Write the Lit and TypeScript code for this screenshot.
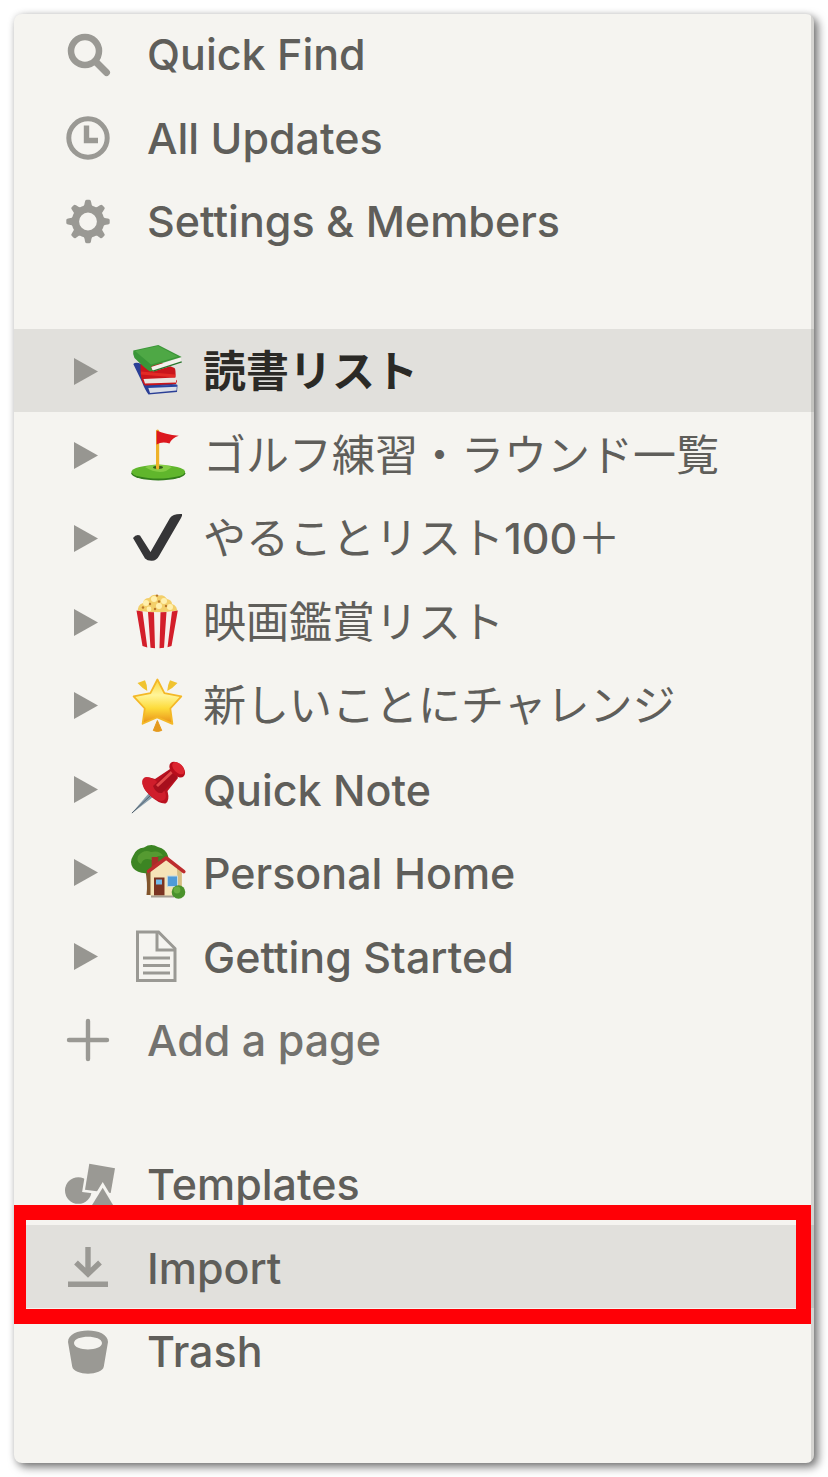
import { LitElement, html, svg, css, nothing } from "lit";
import { customElement } from "lit/decorators.js";

const gearTeeth = [0, 45, 90, 135, 180, 225, 270, 315];

const icons = {
  search: svg`<circle cx="19" cy="20" r="14" fill="none" stroke="currentColor" stroke-width="6.5"/>
    <path d="M30 31L40.5 41.5" stroke="currentColor" stroke-width="7" stroke-linecap="round"/>`,
  clock: svg`<circle cx="22" cy="23" r="19.2" fill="none" stroke="currentColor" stroke-width="5"/>
    <path d="M20.5 10.5V25.5H32" fill="none" stroke="currentColor" stroke-width="5.4"/>`,
  gear: svg`<circle cx="22" cy="23.5" r="12.6" fill="none" stroke="currentColor" stroke-width="7.4"/>
    ${gearTeeth.map(
      (a) => svg`<path transform="rotate(${a} 22 23.5)" d="M16.5 9.5Q18.6 8 19 3.6Q19.2 1.8 20.6 1.8H23.4Q24.8 1.8 25 3.6Q25.4 8 27.5 9.5Z" fill="currentColor"/>`
    )}`,
  plus: svg`<path d="M22 4V42M3 23H41" stroke="currentColor" stroke-width="4.4" stroke-linecap="round"/>`,
  shapes: svg`<circle cx="12.3" cy="29.5" r="13.3" fill="currentColor"/>
    <path d="M23.3 2.8L49 7.2L44.7 32L19 28.8Z" fill="currentColor" stroke="#f5f4f0" stroke-width="5" paint-order="stroke"/>
    <path d="M36.7 26.8L50 49H23Z" fill="currentColor" stroke="#f5f4f0" stroke-width="6" paint-order="stroke"/>`,
  download: svg`<path d="M22 2V29M10 17.5L22 29L34 17.5" fill="none" stroke="currentColor" stroke-width="5.4"/>
    <path d="M2 39.3H42" stroke="currentColor" stroke-width="5.6"/>`,
  bucket: svg`<path fill-rule="evenodd" fill="currentColor" d="M2 14C2 -1.3 42 -1.3 42 14L37.8 38.5C36.5 48 7.5 48 6.2 38.5ZM8 15C8 23.5 36 23.5 36 15C36 6.5 8 6.5 8 15Z"/>`,
};

const emojis = {
  books: svg`<path d="M2.3 21Q4 19 8 20L46.5 42L46 49L17.5 51.5Q14 47 11 39Z" fill="#2a3f96"/>
    <path d="M17 44L46 41.5L45.5 47.5L19 50Z" fill="#d9dde6"/>
    <path d="M17 44L46 42.8" stroke="#2743a0" stroke-width="2"/>
    <path d="M9.7 18.7L24 17L43.5 25Q45 26 44.5 36L46 38L45 41L14 42.5Q8.5 38 9.7 18.7Z" fill="#c9151b"/>
    <path d="M12.5 36L45 34.5V39.5L14 40.5Z" fill="#e9e4df"/>
    <path d="M10 30L44 33" stroke="#e22a25" stroke-width="3"/>
    <path d="M20 24L50 14.5L49.5 20L22 28.5Z" fill="#f3f2ec"/>
    <path d="M2.3 7.5L27.3 2L50.7 14L20.5 23.2Q19.5 25.5 22.5 27.8L19 28.4Q15 26.5 3.5 15Q1.5 11 2.3 7.5Z" fill="#3a9638"/>
    <path d="M4 8L27 3L47 13.5L20 21.5Z" fill="#4ea845"/>
    <path d="M22 28.2L50.7 18.8" stroke="#28752c" stroke-width="1.4"/>`,
  golf: svg`<ellipse cx="27.3" cy="46.2" rx="27" ry="7.2" fill="#347e1d"/>
    <ellipse cx="27.3" cy="44.8" rx="26.8" ry="6.8" fill="#60b62c"/>
    <path d="M14 40Q27 34.5 41 40L35 44Q25 47 14 40Z" fill="#84cc45"/>
    <ellipse cx="27" cy="40.3" rx="5" ry="1.6" fill="#315e1b"/>
    <path d="M26.6 4V41" stroke="#eeb229" stroke-width="3.2" stroke-linecap="round"/>
    <path d="M25.6 3.5Q34 7.5 47.8 8.8Q41 10.8 38.5 16.5Q31 14 25.6 17.5Z" fill="#dc171e"/>`,
  check: svg`<path d="M2 28Q5 24 9 25.5L19.5 42L39 8Q42 3.5 51 4Q51.5 5.5 50 8L28 46Q25.5 50.8 21 50.8Q16.5 51 14 48.5Z" fill="#353537"/>`,
  popcorn: svg`<path d="M7 18Q6 11 12 9Q13 4 18 4Q22 -1 28 1.5Q33 0 36 5Q41 6 41 10Q47 12 46 19Z" fill="#f3cf6a"/>
    <g fill="#fff0ae"><circle cx="15" cy="9" r="3"/><circle cx="23" cy="5" r="3"/><circle cx="33" cy="7" r="3"/><circle cx="28" cy="12" r="3"/><circle cx="39" cy="13" r="3"/><circle cx="18" cy="15" r="2.4"/></g>
    <g fill="#b9762a"><circle cx="26" cy="1.6" r="1.2"/><circle cx="19" cy="10" r="1.2"/><circle cx="28" cy="7.5" r="1.2"/><circle cx="35" cy="12" r="1.2"/><circle cx="12" cy="13.5" r="1.2"/><circle cx="24" cy="15" r="1.2"/></g>
    <path d="M5.5 16.5Q26 20 46.8 16.5L40.5 52Q26 56 11.5 52Z" fill="#f7efec"/>
    <path d="M5.5 16.5L11.5 17.4L16.3 53.4L11.5 52ZM17 18L23 18.2L24 54.2L19.5 53.8ZM29.5 18.2L35.5 18L33 53.8L28.5 54.2ZM41 17.4L46.8 16.5L40.5 52L36.5 53.2Z" fill="#d31e2a"/>`,
  star: svg`<defs><linearGradient id="glow" x1="0" y1="0" x2="0" y2="1"><stop offset="0" stop-color="#fbd63a"/><stop offset="0.35" stop-color="#fff59a"/><stop offset="0.65" stop-color="#fddb3a"/><stop offset="1" stop-color="#e98e17"/></linearGradient></defs>
    <path d="M6.5 6L14 3.2Q16.5 8 16.3 14Q11 11 6.5 6ZM46.5 6L39 3.2Q36.5 8 36.2 14Q42 11 46.5 6Z" fill="#f0c330"/>
    <path d="M26.4 43.5L22.3 53.5Q26.4 55.5 30.7 53.5Z" fill="#e59a1d" stroke="#e59a1d" stroke-linejoin="round"/>
    <path d="M26.4 2.5L33.4 16.2L50.3 19.3L39.3 31.5L41.4 46.8L26.4 40.3L11.6 46.8L13.8 31.5L2.6 19.3L19.4 16.2Z" fill="url(#glow)" stroke="#f4b827" stroke-width="1.8" stroke-linejoin="round"/>`,
  pin: svg`<path d="M0 53L18 32L22 36Z" fill="#879cab"/>
    <path d="M1 52L20 34" stroke="#52616d" stroke-width="1"/>
    <path d="M12 20Q15 14 24 18L39 8L47 17L36.5 30Q39 40 34.5 42.5Q28 43 19 34.5Q10 26 12 20Z" fill="#ba1220"/>
    <ellipse cx="23" cy="28" rx="7.5" ry="15" transform="rotate(-45 23 28)" fill="#d01d2b"/>
    <path d="M22 25L40 8L47 16L31 32Q25 33 22 25Z" fill="#a70f1d"/>
    <path d="M26 25L42 10" stroke="#e34b4b" stroke-width="3"/>
    <ellipse cx="46.2" cy="8.6" rx="6" ry="9.3" transform="rotate(-45 46.2 8.6)" fill="#b80d1b"/>
    <ellipse cx="47.4" cy="7.2" rx="4.4" ry="7.5" transform="rotate(-45 47.4 7.2)" fill="#dc2530"/>`,
  house: svg`<path d="M14 25H24V51H15.5Q17 39 14 25Z" fill="#81552d"/>
    <path d="M2 24Q-2 18 2 12Q5 4 13 3.5Q20 -1 27 3Q35 5 37 12Q40 21 32 25L17 29Q7 30 2 24Z" fill="#3c8523"/>
    <path d="M7 12Q13 5 20 8Q29 6 32 12Q25 11 23 17Q13 12 10 20Q5 18 7 12Z" fill="#559a31"/>
    <path d="M20.7 13H27.3V23H20.7Z" fill="#a72d28"/>
    <path d="M19.5 27L35 15L50.8 28V52H19.5Z" fill="#f5e4b8"/>
    <path d="M46 24L50.8 28V52H47Z" fill="#d6bd82"/>
    <path d="M17.4 27.4L35.2 14L52.8 27.6" fill="none" stroke="#bd2c2d" stroke-width="3.6" stroke-linejoin="round" stroke-linecap="round"/>
    <path d="M23 33.5H33.5V51.5H23Z" fill="#7a3422"/><path d="M25 35.5H31V40.5H25Z" fill="#72b9e8"/>
    <path d="M36.3 32H46.5V42.5H36.3Z" fill="#4f9bd8" stroke="#c7dce0" stroke-width="1"/>
    <path d="M20 52.5H43" stroke="#a59e92" stroke-width="2"/>
    <circle cx="47.5" cy="48" r="6.8" fill="#4a922b"/><circle cx="46" cy="46" r="3.4" fill="#69ad3f"/>`,
  page: svg`<g fill="none" stroke="#9a9994" stroke-width="3"><path d="M6.5 4H27.5L44 20.5V52.5H6.5Z"/><path d="M26 4V22H44"/><path d="M12 30H39M12 37.5H39M12 45H39"/></g>`,
};

type IconName = keyof typeof icons;
type EmojiName = keyof typeof emojis;

interface Action { icon: IconName; label: string; current?: boolean; soft?: boolean }
interface Page { emoji: EmojiName; label: unknown; name: string; japanese?: boolean; current?: boolean }

const shortcuts: Action[] = [
  { icon: "search", label: "Quick Find" },
  { icon: "clock", label: "All Updates" },
  { icon: "gear", label: "Settings & Members" },
];

const pages: Page[] = [
  { emoji: "books", label: "読書リスト", name: "読書リスト", japanese: true, current: true },
  { emoji: "golf", label: "ゴルフ練習・ラウンド一覧", name: "ゴルフ練習・ラウンド一覧", japanese: true },
  { emoji: "check", label: html`やることリスト<span class="digits">100</span>＋`, name: "やることリスト100＋", japanese: true },
  { emoji: "popcorn", label: "映画鑑賞リスト", name: "映画鑑賞リスト", japanese: true },
  { emoji: "star", label: "新しいことにチャレンジ", name: "新しいことにチャレンジ", japanese: true },
  { emoji: "pin", label: "Quick Note", name: "Quick Note" },
  { emoji: "house", label: "Personal Home", name: "Personal Home" },
  { emoji: "page", label: "Getting Started", name: "Getting Started" },
];

const tools: Action[] = [
  { icon: "shapes", label: "Templates" },
  { icon: "download", label: "Import", current: true },
  { icon: "bucket", label: "Trash" },
];

@customElement("app-root")
export class AppRoot extends LitElement {
  static styles = css`
    :host {
      display: block;
      padding: 14px;
      background: #fff;
      font-family: Inter, "Noto Sans CJK JP", sans-serif;
      font-size: 43px;
      font-weight: 500;
      color: #5f5e5a;
    }
    .sidebar {
      position: relative;
      display: flex;
      flex-direction: column;
      padding-bottom: 72px;
      border-radius: 8px;
      background: #f5f4f0;
      box-shadow: 4px 4px 10px rgba(0, 0, 0, 0.54), 0 0 6px rgba(0, 0, 0, 0.1);
      overflow: hidden;
    }
    .sidebar::after {
      content: "";
      position: absolute;
      inset: 0 0 0 auto;
      width: 3px;
      background: rgba(0, 0, 0, 0.13);
    }
    .list {
      list-style: none;
      margin: 0;
      padding: 0;
    }
    .shortcuts { margin: -3px 0 68px; }
    .tools { margin-top: 61px; }
    .row {
      position: relative;
      display: flex;
      align-items: center;
      height: 83px;
    }
    .row:nth-child(even) { margin-top: 1px; }
    .current { background: #e1e0dc; }
    .action, .link {
      display: flex;
      flex: 1;
      align-items: center;
      height: 100%;
      border: 0;
      background: none;
      font: inherit;
      color: inherit;
      text-align: left;
      text-decoration: none;
      white-space: nowrap;
    }
    .action {
      gap: 37px;
      padding: 0 0 0 52px;
    }
    .link { gap: 17px; }
    .page { gap: 33px; }
    .toggle {
      display: flex;
      margin: 2px 0 0 60px;
      padding: 0;
      border: 0;
      background: none;
      color: #979691;
    }
    .icon {
      flex: none;
      width: 44px;
      height: 44px;
      overflow: visible;
      color: #9a9994;
    }
    .emoji {
      flex: none;
      width: 55px;
      height: 55px;
      overflow: visible;
    }
    .label { padding-top: 2px; }
    .japanese {
      font-family: "Noto Sans CJK JP", sans-serif;
      font-weight: 400;
      line-height: 60px;
      padding: 0 0 6px;
    }
    .digits {
      font-family: Inter, sans-serif;
      font-weight: 500;
      line-height: 1;
    }
    .current .japanese {
      font-weight: 700;
      color: #2b2a26;
    }
    .soft { color: #73726e; }
    .callout {
      position: absolute;
      inset: -20px 3px -16px 0;
      z-index: 1;
      border: 15px solid #ff0006;
      border-left-width: 12px;
      pointer-events: none;
    }
  `;

  private action(item: Action) {
    return html`<li class="row ${item.current ? "current" : ""}">
      <button class="action ${item.soft ? "soft" : ""}" type="button">
        <svg class="icon" viewBox="0 0 44 44" aria-hidden="true">${icons[item.icon]}</svg>
        <span class="label">${item.label}</span>
      </button>
      ${item.label === "Import" ? html`<span class="callout"></span>` : nothing}
    </li>`;
  }

  private page(item: Page) {
    return html`<li class="row page ${item.current ? "current" : ""}">
      <button class="toggle" type="button" aria-label=${item.name}>
        <svg width="24" height="27" viewBox="0 0 24 27" aria-hidden="true"><path d="M0 0L24 13.5L0 27Z" fill="currentColor"/></svg>
      </button>
      <a class="link" href="#">
        <svg class="emoji" viewBox="0 0 55 55" aria-hidden="true">${emojis[item.emoji]}</svg>
        <span class="label ${item.japanese ? "japanese" : ""}">${item.label}</span>
      </a>
    </li>`;
  }

  render() {
    return html`<nav class="sidebar">
      <ul class="list shortcuts">${shortcuts.map((item) => this.action(item))}</ul>
      <ul class="list pages">
        ${pages.map((item) => this.page(item))}
        ${this.action({ icon: "plus", label: "Add a page", soft: true })}
      </ul>
      <ul class="list tools">${tools.map((item) => this.action(item))}</ul>
    </nav>`;
  }
}
